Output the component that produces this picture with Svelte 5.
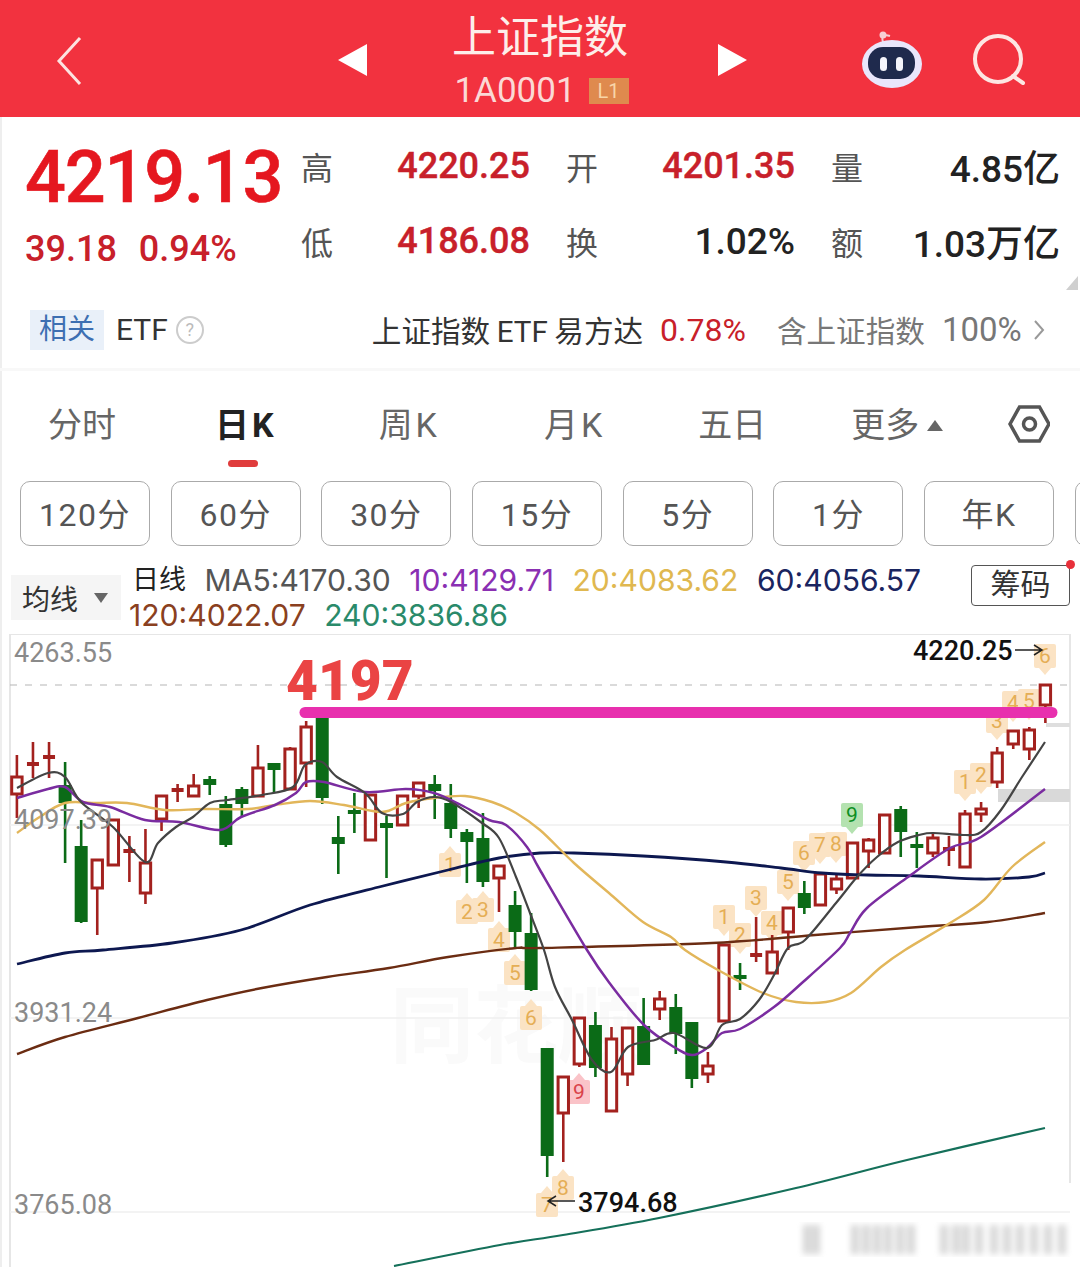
<script lang="ts">
	// r = up day (hollow), g = down day (filled): [type, bodyTop, bodyBottom, wickTop, wickBottom]
	const candles: [string, number, number, number, number][] = [
		['r', 777, 794, 755, 818], ['r', 762, 766, 742, 778], ['r', 755, 759, 742, 778],
		['g', 785, 803, 762, 863], ['g', 846, 922, 820, 923], ['r', 860, 888, 859, 935],
		['r', 820, 865, 820, 866], ['r', 849, 853, 836, 882], ['r', 863, 893, 829, 904],
		['r', 796, 819, 796, 831], ['r', 788, 792, 784, 802], ['r', 786, 796, 774, 796],
		['g', 779, 785, 776, 795], ['g', 804, 845, 796, 847], ['g', 789, 804, 787, 816],
		['r', 768, 796, 745, 796], ['g', 763, 770, 763, 793], ['r', 749, 789, 747, 789],
		['r', 727, 763, 721, 787], ['g', 718, 798, 718, 804], ['g', 837, 844, 816, 874],
		['g', 810, 814, 793, 833], ['r', 795, 840, 795, 840], ['g', 823, 828, 816, 878],
		['r', 796, 825, 796, 825], ['r', 783, 796, 782, 808], ['g', 784, 791, 775, 819],
		['g', 803, 829, 784, 838], ['g', 832, 842, 829, 883], ['g', 838, 882, 813, 887],
		['r', 866, 878, 866, 912], ['g', 905, 932, 891, 947], ['g', 933, 990, 913, 991],
		['g', 1048, 1156, 1048, 1177], ['r', 1077, 1113, 1077, 1162], ['r', 1018, 1064, 1018, 1067],
		['g', 1025, 1068, 1012, 1077], ['r', 1039, 1111, 1027, 1111], ['r', 1028, 1074, 1028, 1086],
		['g', 1026, 1065, 998, 1065], ['r', 999, 1009, 991, 1020], ['g', 1007, 1034, 994, 1054],
		['g', 1022, 1079, 1022, 1088], ['r', 1066, 1074, 1052, 1083], ['r', 945, 1021, 945, 1021],
		['g', 975, 979, 963, 990], ['r', 953, 957, 917, 962], ['r', 952, 973, 935, 973],
		['r', 908, 932, 908, 950], ['g', 893, 908, 881, 914], ['r', 874, 905, 874, 905],
		['r', 879, 889, 873, 894], ['r', 843, 878, 843, 878], ['r', 840, 851, 838, 868],
		['r', 815, 853, 815, 853], ['g', 809, 832, 806, 857], ['g', 844, 848, 832, 868],
		['r', 838, 853, 832, 857], ['r', 847, 851, 836, 866], ['r', 814, 867, 810, 867],
		['r', 809, 814, 802, 822], ['r', 753, 782, 747, 788], ['r', 731, 744, 731, 749],
		['r', 730, 749, 727, 760], ['r', 685, 705, 685, 723]
	];

	const lines = [
		{
			color: '#0d1850',
			width: 2.8,
			pts: [[17,964],[65,953],[103,950],[172,943],[241,930],[310,905],[379,887],[448,870],[499,858],[540,853],[574,853],[643,856],[726,862],[781,868],[822,873],[867,875],[919,876],[981,879],[1029,877],[1045,873]]
		},
		{
			color: '#6b2c12',
			width: 2.4,
			pts: [[17,1054],[65,1037],[138,1018],[207,1000],[262,988],[327,977],[389,968],[448,957],[516,948],[540,948],[712,943],[815,935],[919,927],[988,922],[1045,913]]
		},
		{
			color: '#15705a',
			width: 2.2,
			pts: [[394,1266],[500,1245],[563,1235],[659,1218],[796,1188],[907,1160],[1045,1128]]
		},
		{
			color: '#e2b65a',
			width: 2.4,
			pts: [[17,833],[38,818],[65,803],[96,803],[127,803],[165,810],[203,809],[248,809],[275,805],[310,801],[344,805],[382,812],[406,803],[434,798],[465,796],[492,802],[516,813],[540,830],[574,863],[609,893],[643,922],[671,937],[685,950],[718,970],[763,993],[796,1002],[826,1002],[851,993],[881,967],[905,950],[950,923],[984,900],[1012,867],[1045,842]]
		},
		{
			color: '#7a2ca0',
			width: 2.5,
			pts: [[17,798],[48,789],[65,787],[83,802],[110,807],[145,820],[179,822],[220,830],[241,817],[275,805],[296,793],[306,782],[324,782],[365,792],[406,789],[434,793],[461,805],[489,820],[506,825],[527,847],[540,870],[587,950],[611,985],[644,1025],[674,1047],[692,1055],[707,1048],[722,1033],[740,1029],[774,1007],[803,982],[840,948],[850,933],[867,908],[908,877],[950,848],[981,837],[1045,789]]
		},
		{
			color: '#444444',
			width: 2.2,
			pts: [[17,788],[48,773],[65,777],[81,802],[113,827],[145,862],[158,843],[176,827],[193,817],[210,803],[227,800],[262,795],[293,787],[305,765],[322,762],[337,777],[365,793],[382,813],[403,814],[417,802],[434,797],[451,802],[482,823],[499,838],[516,877],[530,913],[544,950],[555,987],[572,1020],[592,1060],[611,1072],[628,1047],[655,1040],[674,1033],[707,1048],[722,1025],[740,1019],[759,1000],[774,975],[788,948],[805,940],[836,903],[857,877],[877,857],[898,842],[919,835],[933,833],[964,835],[981,832],[1001,810],[1022,777],[1045,742]]
		}
	];

	// [digit, x, y, points to candle above?, kind]
	const marks: [number, number, number, boolean, string][] = [
		[1,450,865,true,'o'],[2,467,912,true,'o'],[3,483,910,true,'o'],[4,499,940,true,'o'],[5,515,973,true,'o'],[6,531,1018,true,'o'],
		[7,547,1205,true,'o'],[8,563,1188,true,'o'],[9,579,1092,true,'p'],
		[1,724,917,false,'o'],[2,740,935,false,'o'],[3,756,898,false,'o'],[4,772,923,false,'o'],[5,788,882,false,'o'],[6,804,853,false,'o'],
		[7,820,845,false,'o'],[8,836,844,false,'o'],[9,852,815,false,'n'],
		[1,965,782,false,'o'],[2,981,775,false,'o'],[3,997,721,false,'o'],[4,1013,703,false,'o'],[5,1029,701,false,'o'],[6,1045,656,false,'o']
	];

	const axis = [['4263.55', 662], ['4097.39', 829], ['3931.24', 1022], ['3765.08', 1214]];
	const grid = [825, 1018, 1212];
	const stripes = [803, 812, 851, 862, 873, 884, 896, 907, 940, 952, 962, 975, 990, 1003, 1016, 1030, 1044, 1058];
	const periods = ['120分', '60分', '30分', '15分', '5分', '1分', '年K'];

	const candleX = (i: number) => 16.9 + 16.07 * i;

	// catmull-rom so the averages read as curves rather than straight pieces
	function smooth(pts: number[][]) {
		let d = `M${pts[0][0]} ${pts[0][1]}`;
		for (let i = 0; i < pts.length - 1; i++) {
			const p0 = pts[i - 1] ?? pts[i];
			const p1 = pts[i];
			const p2 = pts[i + 1];
			const p3 = pts[i + 2] ?? p2;
			const c1x = p1[0] + (p2[0] - p0[0]) / 6;
			const c1y = p1[1] + (p2[1] - p0[1]) / 6;
			const c2x = p2[0] - (p3[0] - p1[0]) / 6;
			const c2y = p2[1] - (p3[1] - p1[1]) / 6;
			d += ` C${c1x.toFixed(1)} ${c1y.toFixed(1)} ${c2x.toFixed(1)} ${c2y.toFixed(1)} ${p2[0]} ${p2[1]}`;
		}
		return d;
	}
</script>

<div class="page">
	<header class="top">
		<svg class="back" width="26" height="50" viewBox="0 0 26 50">
			<path d="M24 2 L3 25 L24 48" fill="none" stroke="#fde3e0" stroke-width="3" />
		</svg>
		<svg class="prev" width="30" height="32" viewBox="0 0 30 32">
			<path d="M29 0 V32 L0 16 Z" fill="#fff" />
		</svg>
		<div class="title">
			<div class="name">上证指数</div>
			<div class="code">1A0001<span class="level">L1</span></div>
		</div>
		<svg class="next" width="30" height="32" viewBox="0 0 30 32">
			<path d="M1 0 V32 L30 16 Z" fill="#fff" />
		</svg>
		<svg class="robot" width="62" height="62" viewBox="860 28 62 62">
			<path d="M883 42 C881 36 884 34 890 36" fill="none" stroke="#f7cfd6" stroke-width="2" />
			<circle cx="883" cy="35" r="3.5" fill="#f7cfd6" />
			<ellipse cx="892" cy="64" rx="30" ry="24" fill="#e9e6fb" />
			<rect x="868" y="47" width="47" height="32" rx="15" fill="#1f2a4d" />
			<rect x="880" y="57" width="7" height="14" rx="3.5" fill="#f4f4fb" />
			<rect x="896" y="57" width="7" height="14" rx="3.5" fill="#f4f4fb" />
		</svg>
		<svg class="search" width="56" height="56" viewBox="972 34 56 56">
			<circle cx="998" cy="60" r="23" fill="none" stroke="#fde6e2" stroke-width="4" />
			<path d="M1013 77 L1023 84" fill="none" stroke="#fde6e2" stroke-width="4" stroke-linecap="round" />
		</svg>
	</header>

	<section class="quote">
		<div class="last">
			<div class="price">4219.13</div>
			<div class="change"><span>39.18</span><span>0.94%</span></div>
		</div>
		<div class="stats">
			<div class="stat"><span class="k">高</span><span class="v red">4220.25</span></div>
			<div class="stat"><span class="k">开</span><span class="v red">4201.35</span></div>
			<div class="stat"><span class="k">量</span><span class="v">4.85亿</span></div>
			<div class="stat"><span class="k">低</span><span class="v red">4186.08</span></div>
			<div class="stat"><span class="k">换</span><span class="v">1.02%</span></div>
			<div class="stat"><span class="k">额</span><span class="v">1.03万亿</span></div>
		</div>
		<div class="corner"></div>
	</section>

	<section class="etf">
		<span class="tag">相关</span>
		<span class="etf-name">ETF</span>
		<span class="help">?</span>
		<span class="fund">上证指数<em>ETF</em>易方达</span>
		<span class="fund-pct">0.78%</span>
		<span class="hold">含上证指数</span>
		<span class="hold-pct">100%</span>
		<svg width="12" height="22" viewBox="0 0 12 22">
			<path d="M2 2 L10 11 L2 20" fill="none" stroke="#999" stroke-width="2" />
		</svg>
	</section>

	<nav class="tabs">
		<span class="tab t1">分时</span>
		<span class="tab t2 active">日K</span>
		<span class="tab t3">周K</span>
		<span class="tab t4">月K</span>
		<span class="tab t5">五日</span>
		<span class="tab t6">更多<i class="up"></i></span>
		<svg class="gear" width="42" height="38" viewBox="1008 404 42 38">
			<path d="M1010 423 L1019.5 406 H1039.5 L1049 423 L1039.5 440 H1019.5 Z" fill="none" stroke="#555" stroke-width="3.5" />
			<circle cx="1029.5" cy="423" r="6" fill="none" stroke="#555" stroke-width="3.5" />
		</svg>
	</nav>

	<div class="periods">
		{#each periods as p}
			<button class="period">{p}</button>
		{/each}
		<button class="period"></button>
	</div>

	<div class="ma">
		<div class="ma-chip">均线<i class="down"></i></div>
		<div class="ma-values">
			<span class="dk">日线</span><span class="c5">MA5:4170.30</span><span class="c10">10:4129.71</span><span class="c20">20:4083.62</span><span class="c60">60:4056.57</span><span class="c120">120:4022.07</span><span class="c240">240:3836.86</span>
		</div>
		<div class="chips-btn">筹码<b></b></div>
	</div>

	<svg class="chart" width="1080" height="633" viewBox="0 634 1080 633">
		<defs>
			<filter id="smear"><feGaussianBlur stdDeviation="3" /></filter>
		</defs>
		<path d="M10 1267 V634 H1070 V1183" fill="none" stroke="#e6e6e6" stroke-width="2" />
		<text class="watermark" x="390" y="1056">同花顺</text>
		<line x1="10" x2="1070" y1="685" y2="685" stroke="#b5b5b5" stroke-width="1.2" stroke-dasharray="7 8" />
		{#each grid as y}
			<line x1="10" x2="1070" y1={y} y2={y} stroke="#efefef" stroke-width="1.5" />
		{/each}

		<rect x="1046" y="723" width="24" height="4" fill="#dedede" />
		<rect x="998" y="789" width="72" height="13" fill="#d9d9d9" />
		<g filter="url(#smear)">
			{#each stripes as x}
				<rect {x} y="1225" width="8" height="29" fill="#d6d6d6" />
			{/each}
		</g>

		{#each marks as [digit, x, y, pointsUp, kind]}
			<g class="mark {kind}">
				<rect x={x - 11} y={y - 12} width="22" height="24" rx="2" />
				{#if pointsUp}
					<path d="M{x - 6} {y - 12} L{x} {y - 19} L{x + 6} {y - 12} Z" />
				{:else}
					<path d="M{x - 6} {y + 12} L{x} {y + 19} L{x + 6} {y + 12} Z" />
				{/if}
				<text x={x} y={y + 7}>{digit}</text>
			</g>
		{/each}

		{#each candles as [kind, top, bottom, wickTop, wickBottom], i}
			{@const x = candleX(i)}
			{@const color = kind === 'r' ? '#a3211e' : '#0b6b17'}
			<line x1={x} x2={x} y1={wickTop} y2={wickBottom} stroke={color} stroke-width="2.6" />
			{#if kind === 'g'}
				<rect x={x - 6.5} y={top} width="13" height={bottom - top} fill={color} />
			{:else if bottom - top <= 4}
				<rect x={x - 6} y={top} width="12" height={bottom - top} fill={color} />
			{:else}
				<rect x={x - 5.2} y={top} width="10.4" height={bottom - top} fill="#fff" stroke={color} stroke-width="3" />
			{/if}
		{/each}

		{#each lines as line}
			<path d={smooth(line.pts)} fill="none" stroke={line.color} stroke-width={line.width} stroke-linejoin="round" />
		{/each}

		{#each axis as [label, y]}
			<text class="axis" x="14" {y}>{label}</text>
		{/each}

		<path d="M305 712.5 H1052" stroke="#e830ae" stroke-width="11" stroke-linecap="round" />
		<text class="level-text" x="286" y="700">4197</text>

		<text class="extreme" x="913" y="660">4220.25</text>
		<path d="M1015 650 H1041 M1034 645 L1042 650 L1034 655" fill="none" stroke="#222" stroke-width="1.5" />
		<text class="extreme" x="578" y="1212">3794.68</text>
		<path d="M575 1201 H549 M556 1196 L548 1201 L556 1206" fill="none" stroke="#222" stroke-width="1.5" />
	</svg>
</div>

<style>
	:global(body) {
		margin: 0;
		background: #fff;
	}

	.page {
		width: 1080px;
		height: 1267px;
		overflow: hidden;
		font-family: Roboto, "Noto Sans CJK SC", sans-serif;
		color: #222;
		background: #fff;
		box-shadow: inset 2px 0 0 #eee;
	}

	/* top bar */
	.top {
		height: 117px;
		background: #f2323f;
		display: flex;
		align-items: center;
		box-sizing: border-box;
		padding-left: 56px;
	}

	.back {
		margin-right: 256px;
		margin-top: 4px;
	}

	.prev,
	.next {
		margin-top: 2px;
	}

	.title {
		width: 349px;
		text-align: center;
		color: #fdeeea;
	}

	.name {
		font-size: 44px;
		line-height: 50px;
		margin: 6px 5px 0 0;
	}

	.code {
		font-size: 35px;
		line-height: 40px;
		color: #fbd9d6;
		display: flex;
		align-items: center;
		justify-content: center;
		margin: 8px 2px 0 0;
	}

	.level {
		font-size: 20px;
		line-height: 26px;
		width: 40px;
		text-align: center;
		margin-left: 13px;
		background: #df8a4e;
		color: #f8d5a8;
	}

	.robot {
		margin-left: 113px;
	}

	.search {
		margin-left: 50px;
		margin-top: 4px;
	}

	/* quote */
	.quote {
		height: 174px;
		display: flex;
		box-sizing: border-box;
		padding: 25px 0 0 25px;
		position: relative;
	}

	.last {
		width: 276px;
		color: #e5171f;
	}

	.price {
		font-size: 72px;
		line-height: 72px;
		font-weight: 500;
		letter-spacing: -1.2px;
		-webkit-text-stroke: 0.6px #e5171f;
	}

	.change {
		display: flex;
		gap: 22px;
		font-size: 36px;
		line-height: 40px;
		font-weight: 500;
		margin-top: 15px;
		color: #c8202a;
	}

	.stats {
		display: grid;
		grid-template-columns: repeat(3, 229px);
		column-gap: 36px;
		row-gap: 27px;
		height: 112px;
	}

	.stat {
		display: flex;
		justify-content: space-between;
		align-items: center;
		height: 48px;
	}

	.k {
		font-size: 32px;
		color: #555;
	}

	.v {
		font-size: 37px;
		font-weight: 500;
		color: #222;
	}

	.v.red {
		font-size: 36px;
		color: #c8202a;
		-webkit-text-stroke: 0.4px #c8202a;
	}

	.corner {
		position: absolute;
		right: 2px;
		top: 159px;
		border-left: 12px solid transparent;
		border-bottom: 14px solid #cfcfcf;
	}

	/* etf row */
	.etf {
		height: 80px;
		display: flex;
		align-items: center;
		box-sizing: border-box;
		padding-left: 30px;
		font-size: 29.6px;
		white-space: nowrap;
		border-bottom: 3px solid #f8f8f8;
	}

	.etf > * {
		flex: none;
	}

	.tag {
		width: 74px;
		height: 40px;
		line-height: 40px;
		text-align: center;
		background: #e9f0f9;
		color: #3d6fb2;
		font-size: 28px;
	}

	.etf-name {
		margin-left: 12px;
		font-size: 30px;
		color: #333;
	}

	.help {
		width: 24px;
		height: 24px;
		margin-left: 8px;
		border: 2px solid #ccc;
		border-radius: 50%;
		font-size: 18px;
		line-height: 24px;
		text-align: center;
		color: #bbb;
	}

	.fund {
		margin-left: 168px;
		color: #333;
	}

	.fund em {
		font-style: normal;
		margin: 0 6.5px;
	}

	.fund-pct {
		margin-left: 17px;
		font-size: 32px;
		color: #c8202a;
	}

	.hold {
		margin-left: 31px;
		color: #777;
	}

	.hold-pct {
		margin-left: 17px;
		font-size: 33px;
		color: #777;
		margin-right: 11px;
	}

	/* period tabs */
	.tabs {
		height: 110px;
		display: flex;
		align-items: center;
		padding-left: 48px;
		padding-bottom: 2px;
		font-size: 34px;
		color: #666;
		box-sizing: border-box;
	}

	.tab {
		position: relative;
		line-height: 40px;
	}

	.t2,
	.t3,
	.t4 {
		letter-spacing: 3px;
	}

	.t2 {
		margin-left: 99px;
	}

	.t3 {
		margin-left: 102px;
	}

	.t4 {
		margin-left: 104px;
	}

	.t5 {
		margin-left: 93px;
	}

	.t6 {
		margin-left: 85px;
		display: flex;
		align-items: center;
	}

	.active {
		color: #222;
		font-weight: 700;
	}

	.active::after {
		content: '';
		position: absolute;
		left: 13px;
		top: 55px;
		width: 30px;
		height: 7px;
		border-radius: 4px;
		background: #e03c3c;
	}

	.up {
		margin-left: 8px;
		border-left: 8px solid transparent;
		border-right: 8px solid transparent;
		border-bottom: 11px solid #666;
	}

	.gear {
		margin-left: 65px;
		margin-top: -2px;
	}

	.periods {
		display: flex;
		gap: 20.7px;
		padding-left: 20px;
		height: 65px;
		width: 1300px;
	}

	.period {
		width: 130px;
		height: 65px;
		flex: none;
		box-sizing: border-box;
		border: 1.5px solid #aaa;
		border-radius: 10px;
		background: #fff;
		font-family: inherit;
		font-size: 32px;
		letter-spacing: 1.5px;
		color: #555;
		padding: 0 0 3px;
	}

	/* moving averages */
	.ma {
		height: 88px;
		display: flex;
		box-sizing: border-box;
		position: relative;
		padding-left: 11px;
	}

	.ma-chip {
		width: 110px;
		height: 45px;
		margin-top: 29px;
		background: #f5f5f5;
		box-sizing: border-box;
		padding-left: 11px;
		display: flex;
		align-items: center;
		font-size: 28px;
		color: #333;
	}

	.down {
		margin-left: 16px;
		border-left: 7px solid transparent;
		border-right: 7px solid transparent;
		border-top: 10px solid #666;
	}

	.ma-values {
		margin: 18px 0 0 8px;
		width: 810px;
		font-family: Inter, "Noto Sans CJK SC", sans-serif;
		font-size: 30.1px;
		line-height: 32px;
		display: flex;
		flex-wrap: wrap;
		column-gap: 18.5px;
	}

	.dk {
		color: #222;
		font-size: 27px;
		margin-left: 3px;
	}

	.c5 { color: #555; }
	.c10 { color: #8a2fb2; }
	.c20 { color: #e0b850; }
	.c60 { color: #1a2560; }
	.c120 { color: #8a4020; }
	.c240 { color: #2a8a6a; }

	.chips-btn {
		position: absolute;
		left: 971px;
		top: 19px;
		width: 99px;
		height: 41px;
		box-sizing: border-box;
		border: 1.5px solid #555;
		border-radius: 4px;
		font-size: 30px;
		line-height: 38px;
		text-align: center;
		color: #333;
	}

	.chips-btn b {
		position: absolute;
		right: -6px;
		top: -6px;
		width: 9px;
		height: 9px;
		border-radius: 50%;
		background: #e8303a;
	}

	/* chart */
	.chart {
		display: block;
		font-family: Roboto, sans-serif;
	}

	.axis {
		font-size: 27px;
		fill: #8a8a8a;
	}

	.extreme {
		font-size: 27px;
		font-weight: 500;
		fill: #111;
	}

	.level-text {
		font-size: 55px;
		font-weight: 900;
		fill: #ea4444;
	}

	.watermark {
		font-family: "Noto Sans CJK SC", sans-serif;
		font-size: 84px;
		font-weight: 700;
		fill: #fafafa;
	}

	.mark rect,
	.mark path {
		fill: #fbe3c4;
	}

	.mark text {
		font-size: 21px;
		text-anchor: middle;
		fill: #e5ae55;
	}

	.mark.p rect,
	.mark.p path {
		fill: #fac3c8;
	}

	.mark.p text {
		fill: #d9424a;
	}

	.mark.n rect,
	.mark.n path {
		fill: #b4e2b0;
	}

	.mark.n text {
		fill: #0d8f24;
	}
</style>
